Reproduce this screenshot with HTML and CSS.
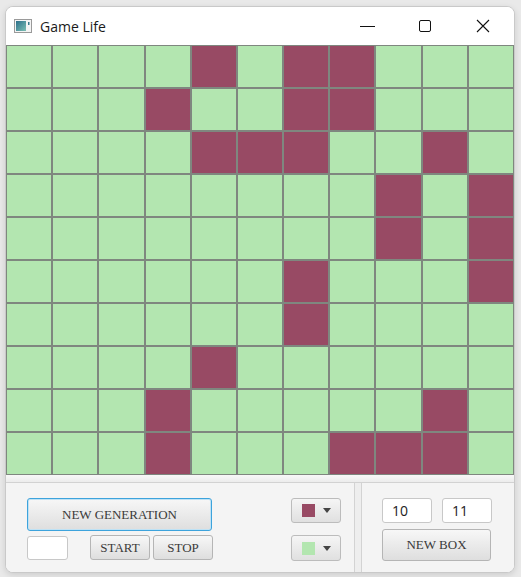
FILE: index.html
```html
<!DOCTYPE html>
<html>
<head>
<meta charset="utf-8">
<link rel="stylesheet" href="styles.css">
</head>
<body>
<div class="window">
  <div class="titlebar">
    <svg class="app-icon" width="18" height="14" viewBox="0 0 18 14">
      <rect x="0.5" y="0.5" width="17" height="13" fill="#f4f4f4" stroke="#9a9a9a"/>
      <defs><linearGradient id="g" x1="0" y1="0" x2="1" y2="1"><stop offset="0" stop-color="#2c6f8a"/><stop offset="1" stop-color="#7cc0b4"/></linearGradient></defs>
      <rect x="2" y="2" width="10" height="10" fill="url(#g)"/>
      <rect x="14" y="3" width="1.5" height="3" fill="#3b7a8c"/>
    </svg>
    <span class="title">Game Life</span>
    <div class="controls">
      <svg class="ctl" width="46" height="30" viewBox="0 0 46 30"><line x1="16" y1="15.5" x2="31" y2="15.5" stroke="#111" stroke-width="1"/></svg>
      <svg class="ctl" width="46" height="30" viewBox="0 0 46 30"><rect x="17.5" y="9.5" width="11" height="11" rx="1.5" fill="none" stroke="#111" stroke-width="1"/></svg>
      <svg class="ctl" width="46" height="30" viewBox="0 0 46 30"><path d="M17 9 L29 21 M29 9 L17 21" stroke="#111" stroke-width="1.1"/></svg>
    </div>
  </div>
  <div class="grid" id="grid"></div>
  <div class="hdivider"></div>
  <div class="bottom">
    <div class="left-pane">
      <div class="actions">
        <button class="btn btn-gen">NEW GENERATION</button>
        <div class="row">
          <input class="field field-small" type="text" value="">
          <button class="btn btn-sm btn-start">START</button>
          <button class="btn btn-sm">STOP</button>
        </div>
      </div>
      <div class="pickers">
        <div class="picker"><span class="swatch swatch-live"></span><span class="arrow"></span></div>
        <div class="picker picker-2"><span class="swatch swatch-dead"></span><span class="arrow"></span></div>
      </div>
    </div>
    <div class="vdivider"></div>
    <div class="right-pane">
      <div class="row2">
        <input class="field field-num" type="text" value="10">
        <input class="field field-num" type="text" value="11">
      </div>
      <button class="btn btn-box">NEW BOX</button>
    </div>
  </div>
</div>
<script src="script.js"></script>
</body>
</html>
```
FILE: script.js
```js
var live = [
  [4,6,7],
  [3,6,7],
  [4,5,6,9],
  [8,10],
  [8,10],
  [6,10],
  [6],
  [4],
  [3,9],
  [3,7,8,9]
];
var grid = document.getElementById('grid');
for (var r = 0; r < 10; r++) {
  for (var c = 0; c < 11; c++) {
    var d = document.createElement('div');
    d.className = 'cell' + (live[r].indexOf(c) >= 0 ? ' alive' : '');
    grid.appendChild(d);
  }
}
```
FILE: styles.css
```css
html, body {
  margin: 0;
  padding: 0;
}
body {
  background: #e9e9e9;
  width: 521px;
  height: 577px;
  overflow: hidden;
  font-family: "Open Sans", "Noto Sans", sans-serif;
}
.window {
  margin: 6px 0 0 5px;
  width: 508px;
  height: 565px;
  border: 1px solid #c9c9c9;
  border-radius: 8px;
  overflow: hidden;
  background: #ffffff;
  box-shadow: 0 2px 6px rgba(0,0,0,0.12);
  display: flex;
  flex-direction: column;
}
.titlebar {
  height: 38px;
  flex: none;
  display: flex;
  align-items: center;
  background: #ffffff;
}
.app-icon {
  margin-left: 8px;
  margin-top: 0;
}
.title {
  margin-left: 8px;
  font-size: 14px;
  color: #1a1a1a;
  font-family: "Open Sans", "Noto Sans", sans-serif;
}
.controls {
  margin-left: auto;
  display: flex;
  margin-right: 8px;
  gap: 12px;
}
.ctl {
  display: block;
}
.grid {
  flex: none;
  height: 430px;
  display: grid;
  grid-template-columns: repeat(11, 1fr);
  grid-template-rows: repeat(10, 1fr);
  gap: 2px;
  padding: 1px;
  box-sizing: border-box;
  background: #7f877f;
}
.cell {
  background: #b3e6b0;
}
.cell.alive {
  background: #984a64;
}
.hdivider {
  flex: none;
  height: 8px;
  box-sizing: border-box;
  background: linear-gradient(#f8f8f8, #ececec);
  border-bottom: 1px solid #d2d2d2;
}
.bottom {
  flex: 1;
  display: flex;
  background: #f4f4f4;
}
.left-pane {
  width: 348px;
  box-sizing: border-box;
  padding: 15px 13px 0 21px;
  display: flex;
}
.actions {
  display: flex;
  flex-direction: column;
  gap: 5px;
}
.row {
  display: flex;
  align-items: flex-start;
}
.btn {
  font-family: "Liberation Serif", "DejaVu Serif", serif;
  font-size: 13px;
  color: #3a3a3a;
  border: 1px solid #b5b5b5;
  border-radius: 3px;
  background: linear-gradient(#f7f7f7, #dedede);
  padding: 0;
  margin: 0;
  box-sizing: border-box;
}
.btn-gen {
  width: 185px;
  height: 33px;
  border: 1px solid #3da3dc;
  box-shadow: inset 0 0 0 1px #bfe2f5;
}
.btn-sm {
  width: 60px;
  height: 25px;
  margin-left: 3px;
  margin-top: -1px;
}
.btn-start {
  margin-left: 22px;
}
.field {
  box-sizing: border-box;
  border: 1px solid #c8c8c8;
  border-radius: 3px;
  background: #fff;
  margin: 0;
  padding: 0 0 0 9px;
  font-family: "Open Sans", "Noto Sans", sans-serif;
  font-size: 14px;
  color: #222;
  outline: none;
}
.field-small {
  width: 41px;
  height: 24px;
}
.pickers {
  margin-left: auto;
  display: flex;
  flex-direction: column;
  gap: 12px;
}
.picker {
  width: 50px;
  height: 25px;
  box-sizing: border-box;
  border: 1px solid #bcbcbc;
  border-radius: 3px;
  background: linear-gradient(#f5f5f5, #e0e0e0);
  display: flex;
  align-items: center;
  padding-left: 10px;
}
.picker-2 {
  height: 26px;
}
.swatch {
  width: 13px;
  height: 13px;
  display: block;
}
.swatch-live { background: #984a64; }
.swatch-dead { background: #b3e6b0; }
.arrow {
  margin-left: 8px;
  width: 0;
  height: 0;
  border-left: 4.5px solid transparent;
  border-right: 4.5px solid transparent;
  border-top: 5px solid #444;
}
.vdivider {
  width: 8px;
  flex: none;
  box-sizing: border-box;
  border-left: 1px solid #d3d3d3;
  border-right: 1px solid #d3d3d3;
  background: #eeeeee;
}
.right-pane {
  flex: 1;
  padding: 15px 0 0 20px;
  display: flex;
  flex-direction: column;
  gap: 6px;
}
.row2 {
  display: flex;
  gap: 10px;
}
.field-num {
  width: 50px;
  height: 25px;
}
.btn-box {
  width: 109px;
  height: 32px;
}
```
